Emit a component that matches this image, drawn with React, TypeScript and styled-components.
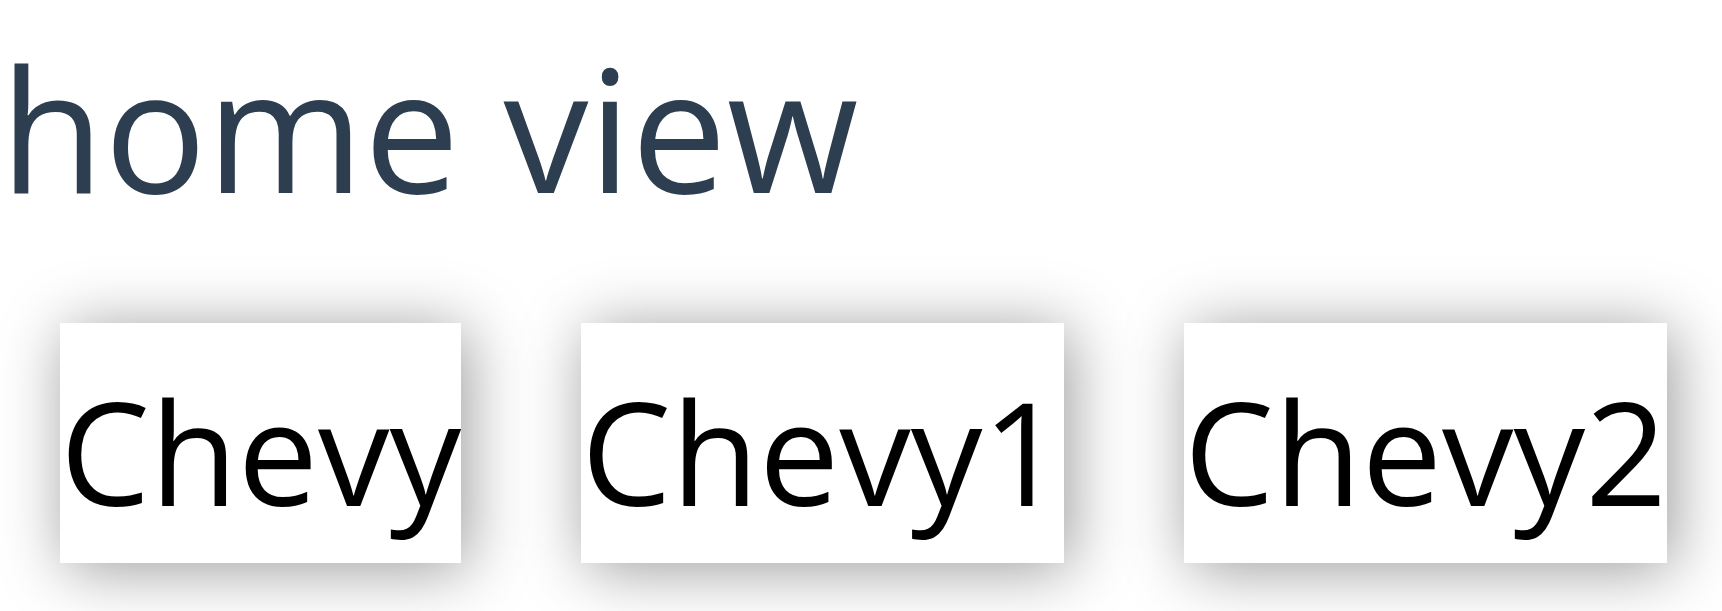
import React from "react";
import styled, { createGlobalStyle } from "styled-components";

const GlobalStyle = createGlobalStyle`
  body {
    margin: 0;
    background: #fff;
    font-family: "Open Sans", "Noto Sans", sans-serif;
  }
`;

const Page = styled.div`
  overflow: hidden;
`;

const Heading = styled.h1`
  margin: 0;
  padding-top: 20px;
  font-size: 170px;
  font-weight: 400;
  line-height: 214px;
  color: #2c3e50;
`;

const CardList = styled.main`
  display: flex;
  gap: 120px;
  padding: 89px 58px 48px 60px;
`;

const Card = styled.article`
  padding: 20px 0 4px;
  background: #fff;
  box-shadow: 6px 6px 60px rgba(0, 0, 0, 0.4);
`;

const CardTitle = styled.h2`
  margin: 0;
  font-size: 143px;
  font-weight: 400;
  line-height: 216px;
  color: #000;
`;

const cars = ["Chevy", "Chevy1", "Chevy2"];

export default function App() {
  return (
    <>
      <GlobalStyle />
      <Page>
        <Heading>home view</Heading>
        <CardList>
          {cars.map((name) => (
            <Card key={name}>
              <CardTitle>{name}</CardTitle>
            </Card>
          ))}
        </CardList>
      </Page>
    </>
  );
}
